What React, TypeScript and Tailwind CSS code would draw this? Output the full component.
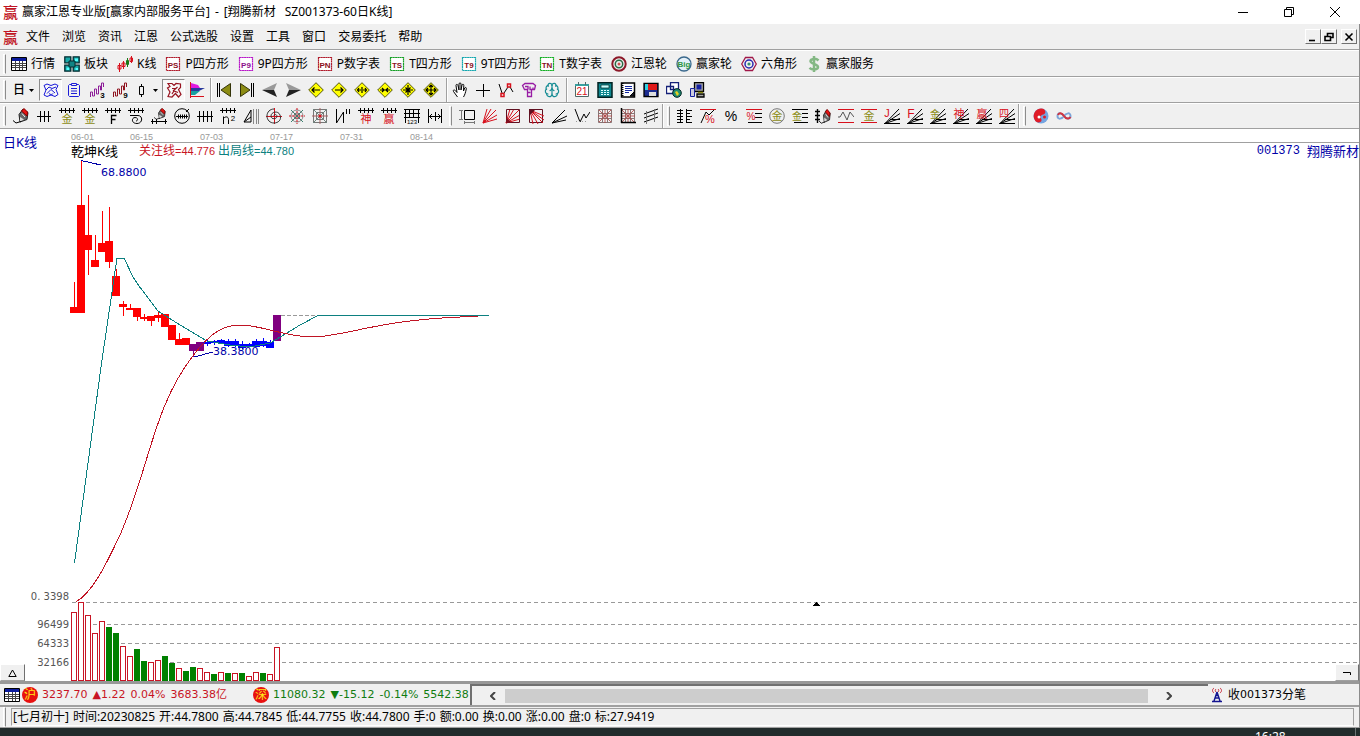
import type { ReactNode } from "react";
import clsx from "clsx";
import { Brain } from "lucide-react";

type Tool = { name: string; icon: ReactNode; pressed?: boolean };

const RED = "#d8101c";
const OLIVE = "#8c8c14";

function Icon({ children }: { children: ReactNode }) {
  return (
    <svg viewBox="0 0 16 16" className="size-4 shrink-0" fill="none" stroke="#000" aria-hidden="true">
      {children}
    </svg>
  );
}

type GlyphProps = { x?: number; y?: number; size?: number; color?: string; bold?: boolean; children: string };

// One character drawn inside an icon
function Glyph({ x = 8, y = 15, size = 11, color = "#000", bold, children }: GlyphProps) {
  return (
    <text
      x={x}
      y={y}
      fontSize={size}
      fontWeight={bold ? 700 : 400}
      fill={color}
      stroke="none"
      textAnchor="middle"
      className="font-['Liberation_Sans','Noto_Sans_CJK_SC',sans-serif]"
    >
      {children}
    </text>
  );
}

const Comb = () => <path d="M0 2.5h16M2.5 0v5M6.5 0v5M10.5 0v5M14.5 0v5" />;

const Pen = () => (
  <>
    <path d="M6 6.5 10 1l5 3.500-1 7L7 14z" fill="#666" stroke="#222" />
    <path d="M8.500 3 11 .5 14.500 4l-.5 4z" fill="#e81414" stroke="#800" />
    <path d="M9 5.500 12 9" stroke="#eee" />
    <path d="M7 9v4.500l4-2z" fill="#ddd" stroke="none" />
    <path d="M0 12.500 3 15l5-1.500" />
  </>
);

const FanLines = () => <path d="M0 15.5h16M1 15.5 16 10.500M1 15.5 16 5.500M1 15.5 15 1M6 11.5h10" />;

const RedFan = () => <path d="M1 15 5 1M1 15 9 1M1 15 14 2M1 15 15 7M1 15 15 11" stroke={RED} />;

const RedGrid = () => (
  <>
    <path d="M1.5 1.5h13v13h-13zM5.5 1v14M10.5 1v14M1 5.5h14M1 10.5h14" stroke="#8a7474" />
    <path d="M2 2l12 12M14 2 2 14M8 1v14M1 8h14" stroke="#b24040" strokeWidth=".8" />
  </>
);

function Diamond({ d }: { d: string }) {
  return (
    <Icon>
      <path d="M8 .7 15.3 8 8 15.3.7 8z" fill="#ffff00" stroke="#55550c" />
      <path d={d} strokeWidth="1.2" />
    </Icon>
  );
}

function LetterBox({ text, color, ink = "#8b1020" }: { text: string; color: string; ink?: string }) {
  return (
    <Icon>
      <rect x="1.5" y="1.5" width="13" height="13" fill="#fff" stroke={color} strokeWidth="1.2" strokeDasharray="2 .3" />
      <Glyph y={11.5} size={8} color={ink} bold>
        {text}
      </Glyph>
    </Icon>
  );
}

const TableIcon = () => (
  <Icon>
    <path d="M.5 1.5h15v13H.5z" fill="#fff" />
    <path d="M1 2h14v3H1z" fill="#0a1a9c" stroke="none" />
    <path d="M1 7.5h14M1 9.5h14M1 11.5h14M4.5 5v9M8.5 5v9M11.5 5v9" stroke="#444" />
  </Icon>
);

const features: Tool[] = [
  { name: "行情", icon: <TableIcon /> },
  {
    name: "板块",
    icon: (
      <Icon>
        <path d="M.8.8h6v6h-6zM9.200.8h6v6h-6zM.8 9.200h6v6h-6zM9.200 9.200h6v6h-6z" fill="#18a8a8" stroke="#042c30" strokeWidth="1.3" />
        <path d="M5 5h6v6H5z" fill="#108484" stroke="#042c30" />
        <path d="M11 2.500h3v2.500h-3zM2.500 11.500h2.500v2.500H2.500zM11.500 12h2.500v2h-2.500z" fill="#5ff" stroke="none" />
      </Icon>
    ),
  },
  {
    name: "K线",
    icon: (
      <Icon>
        <path d="M2.5 7v9M1 9.5h3v3.500H1zM6.5 5v8M5 7h3v3.500H5zM14.5 0v7M13 2h2.500v3.500H13z" stroke={RED} />
        <path d="M10.5 2v9M9.500 4.500h2v4h-2z" stroke="#187a18" />
      </Icon>
    ),
  },
  { name: "P四方形", icon: <LetterBox text="PS" color="#b01c2c" /> },
  { name: "9P四方形", icon: <LetterBox text="P9" color="#b818c8" ink="#8c108c" /> },
  { name: "P数字表", icon: <LetterBox text="PN" color="#b01c2c" /> },
  { name: "T四方形", icon: <LetterBox text="TS" color="#18a028" /> },
  { name: "9T四方形", icon: <LetterBox text="T9" color="#18a8b0" /> },
  { name: "T数字表", icon: <LetterBox text="TN" color="#18b028" /> },
  {
    name: "江恩轮",
    icon: (
      <Icon>
        <circle cx="8" cy="8" r="6.7" stroke="#8c1828" strokeWidth="2" />
        <circle cx="8" cy="8" r="3.7" stroke="#2a6a44" strokeWidth="1.5" />
        <circle cx="8" cy="8" r="1.5" fill="#d05050" stroke="none" />
      </Icon>
    ),
  },
  {
    name: "赢家轮",
    icon: (
      <Icon>
        <circle cx="8" cy="8" r="7" fill="#e4f0f8" stroke="#3a688c" strokeWidth="1.3" />
        <Glyph y={11} size={8} color="#2c9440" bold>
          Big
        </Glyph>
      </Icon>
    ),
  },
  {
    name: "六角形",
    icon: (
      <Icon>
        <path d="M4.5 1.5h7L15.3 8l-3.8 6.5h-7L.7 8z" stroke="#a01848" strokeWidth="1.3" />
        <circle cx="8" cy="8" r="4" stroke="#2828b0" strokeWidth="1.5" />
        <circle cx="8" cy="8" r="1.6" fill="#38906c" stroke="none" />
      </Icon>
    ),
  },
  {
    name: "赢家服务",
    icon: (
      <Icon>
        <path d="M12.5 4.500C10 2 4.500 2.500 4.500 5.300S12 8 12 11s-6 3.200-8.500.8M8 0v16" stroke="#84b884" strokeWidth="2.5" />
      </Icon>
    ),
  },
];

const viewTools: Tool[] = [
  {
    name: "叠加",
    pressed: true,
    icon: (
      <Icon>
        <path d="M1 3.500 4 2l4 1.500L12 2l3 1.500-2 4 2 5-3 2-4-1.500L4 14.500l-3-1.500 2-5zM3 8l3-3 3 1.500 4-1.500M4 11.500l4-4 4 3.500M6 11.500c1 1.500 4 1 4 0" stroke="#1616d8" />
      </Icon>
    ),
  },
  {
    name: "信息",
    icon: (
      <Icon>
        <path d="M5 2.5H3.5l-1 1v10l1 1h9l1-1v-10l-1-1H11M5.5 1.5h5v2h-5zM5 6.5h6M5 9h6M5 11.5h6" stroke="#1c1cd8" />
      </Icon>
    ),
  },
  {
    name: "三浪",
    icon: (
      <Icon>
        <path d="M1.5 15v-5h2v4h2V7h2v5h2V4h2v4h1V1h2v4" stroke="#8c1c98" />
        <Glyph x={13.5} y={16} size={8} bold>
          3
        </Glyph>
      </Icon>
    ),
  },
  {
    name: "九浪",
    icon: (
      <Icon>
        <path d="M1.5 15v-5h2v4h2V7h2v5h2V4h2v4h1V1h2v4" stroke="#901420" />
        <Glyph x={13.5} y={16} size={8} bold>
          9
        </Glyph>
      </Icon>
    ),
  },
];

const signalTools: Tool[] = [
  {
    name: "乾坤",
    pressed: true,
    icon: (
      <Icon>
        <path d="M2 1.500h4l2 2 2-2 4.500.5v3.500l-2 2 2.500 5-2.500 2.500-3-3.500-3.500 3.500-4-.5 2-4.500L1.500 6 4 4.500zM6 6.500h4.500M7 9l4.500-4M6 12l2-3 4 1.500" stroke="#981420" strokeWidth="1.2" />
      </Icon>
    ),
  },
  {
    name: "筹码",
    icon: (
      <Icon>
        <path d="M2 1 9 3l2 3H2z" fill="#e018e0" stroke="none" />
        <path d="M2 6h14l-6 3H2z" fill="#28389c" stroke="none" />
        <path d="M2 9h9l-5 4H2z" fill="#18a0a0" stroke="none" />
        <path d="M1.5 0v16M1 14.5h14" stroke={RED} />
      </Icon>
    ),
  },
];

const moveTools: Tool[] = [
  { name: "首个", icon: <Icon><path d="M1.5 1v14M3.5 1v14" /><path d="M14.5 1.5v13L5 8z" fill={OLIVE} stroke="#333308" /></Icon> },
  { name: "末个", icon: <Icon><path d="M14.5 1v14M12.5 1v14" /><path d="M1.500 1.500v13L11 8z" fill={OLIVE} stroke="#333308" /></Icon> },
  { name: "后退", icon: <Icon><path d="M0 8l15-7-3 7z" fill="#999" stroke="none" /><path d="M0 8h12l3 7z" fill="#222" stroke="none" /></Icon> },
  { name: "前进", icon: <Icon><path d="M16 8 1 1l3 7z" fill="#999" stroke="none" /><path d="M16 8H4l-3 7z" fill="#222" stroke="none" /></Icon> },
  { name: "左移", icon: <Diamond d="M4 8h8M6.5 5.5 4 8l2.5 2.5" /> },
  { name: "右移", icon: <Diamond d="M4 8h8M9.5 5.5 12 8l-2.5 2.5" /> },
  { name: "拉宽", icon: <Diamond d="M3 8h4M9 8h4M5 6 3.500 8 5 10M11 6l1.500 2-1.500 2M8 5v6" /> },
  { name: "压窄", icon: <Diamond d="M3 8h10M5 6l2 2-2 2M11 6 9 8l2 2" /> },
  { name: "缩小", icon: <Diamond d="M3 8h10M8 3v10M5.500 5.500l5 5M10.500 5.500l-5 5" /> },
  { name: "放大", icon: <Diamond d="M3 8h10M8 3v10M6 5l2-2 2 2M6 11l2 2 2-2M5 6 3 8l2 2M11 6l2 2-2 2" /> },
];

const cursorTools: Tool[] = [
  {
    name: "拖动",
    icon: (
      <Icon>
        <path d="M5.500 15 1.500 9.500c-1-1.500 1-2 2-.8L5 10.500 4 3.500c0-1.500 1.500-1.500 2 0L7 8V2c0-1.500 2-1.500 2 0v6l1-5c.4-1.200 2-1 1.800.5L11.500 9l1.200-3c.8-1 2-.5 1.600.8-.8 3.700-1.300 5.700-2.800 8.200" fill="#fff" />
      </Icon>
    ),
  },
  { name: "十字", icon: <Icon><path d="M1 8.5h14M8.5 2v13" /></Icon> },
  {
    name: "折线",
    icon: (
      <Icon>
        <path d="M1 2l3 9M6 11l4-6M12 5l3 5" />
        <path d="M3 11.5h3v3H3zM9.500 2h3v3h-3z" stroke={RED} strokeWidth="1.5" />
      </Icon>
    ),
  },
  {
    name: "预测",
    icon: (
      <Icon>
        <path d="M1.5 3.500 4 1.500h8l2.500 2-1 4h-3v7h-4v-7h-3zM4 4.500h3v3M9 4.500v3h3v-2M6.500 10.500h3" stroke="#981ca4" strokeWidth="1.3" />
      </Icon>
    ),
  },
  { name: "智能", icon: <Brain className="size-4" strokeWidth={1.8} color="#168c94" /> },
];

const systemTools: Tool[] = [
  {
    name: "日历",
    icon: (
      <Icon>
        <path d="M1.5 2.5h13v12h-13z" fill="#fff" stroke="#506868" />
        <path d="M1 2h14v2H1z" fill="#38a0a0" stroke="none" />
        <path d="M4.500 0v3M11.500 0v3" stroke="#506868" />
        <Glyph y={13} size={10} color={RED}>21</Glyph>
      </Icon>
    ),
  },
  {
    name: "计算器",
    icon: (
      <Icon>
        <path d="M1 .8h14v14.400H1z" fill="#108890" stroke="#022" strokeWidth="1.5" />
        <path d="M4 3h8v3H4z" fill="#c8ffff" stroke="#022" strokeWidth=".7" />
        <path d="M4 8.5h8M4 10.5h8M4 12.5h8" stroke="#dff" strokeDasharray="2 1" />
      </Icon>
    ),
  },
  {
    name: "笔记",
    icon: (
      <Icon>
        <path d="M1.5 1h13v14h-13z" fill="#fff" strokeWidth="1.5" />
        <path d="M2.5 1v14" strokeWidth="2" strokeDasharray="1 1" />
        <path d="M5 4.5h7M5 6.5h7M5 8.5h7M5 10.5h4" stroke="#1428a0" />
        <path d="M10 14l4-4v4z" fill="#223" />
      </Icon>
    ),
  },
  {
    name: "保存",
    icon: (
      <Icon>
        <path d="M1 1.5h14v13H1z" fill="#1c2c90" strokeWidth="1.3" />
        <path d="M2 2h3v6H2z" fill="#30d0e0" stroke="none" />
        <path d="M5 2h9v6H5z" fill="#e01818" stroke="none" />
        <path d="M6 10h7v4H6z" fill="#ddd" stroke="none" />
      </Icon>
    ),
  },
  {
    name: "网络",
    icon: (
      <Icon>
        <path d="M4.5.5h8v7h-8zM.5 4.5h7v7h-7z" fill="#fff" stroke="#142078" strokeWidth="1.3" />
        <circle cx="11" cy="11" r="4.3" fill="#208c70" stroke="#022" />
        <path d="M9 10l2-1 2 3-2 2z" fill="#e8d020" stroke="none" />
      </Icon>
    ),
  },
  {
    name: "远程",
    icon: (
      <Icon>
        <path d="M5.5.5h9v9h-9zM8 12h7v3H8z" fill="#aaa" strokeWidth="1.3" />
        <path d="M7.500 2.500h5v5h-5z" fill="#1420a0" stroke="none" />
        <path d="M9 10.500h5" stroke="#8c8c14" strokeWidth="1.500" />
        <path d="M1.5 6.5h4v8h-4z" fill="#ccd" stroke="#1420a0" />
      </Icon>
    ),
  },
];

const drawTools: Tool[] = [
  { name: "画笔", icon: <Icon><Pen /></Icon> },
  { name: "标尺", icon: <Icon><path d="M1 8.5h14M4.5 3v11M8.5 3v11M12.5 3v11" /></Icon> },
  { name: "金尺", icon: <Icon><Comb /><Glyph color={OLIVE}>金</Glyph></Icon> },
  { name: "金尺二", icon: <Icon><Comb /><Glyph color={OLIVE}>金</Glyph></Icon> },
  { name: "斐波", icon: <Icon><Comb /><path d="M6.5 16V7.5h5M6.5 11.5h4" strokeWidth="1.3" /></Icon> },
  { name: "螺旋", icon: <Icon><Comb /><path d="M2 7.5h8c5 0 5 8-1 8s-5.500-6-2-6 3 3.500 1 3.500" /></Icon> },
  { name: "笔尺", icon: <Icon><g transform="translate(3 0) scale(.75)"><Pen /></g><path d="M0 13.5h16M1.5 11v5M5.5 11v5M14.5 11v5" /></Icon> },
  { name: "圆尺", icon: <Icon><circle cx="8" cy="8" r="7.300" /><path d="M2 8.5h12M4.5 6.500v4M6.5 6.500v4M8.5 6.500v4M10.5 6.500v4M12.5 6.500v4M12 4l3-3" /></Icon> },
  { name: "周期线", icon: <Icon><path d="M0 8.5h16M2.5 3v11M6.5 3v11M10.5 3v11M14.5 3v11" /></Icon> },
  { name: "平方", icon: <Icon><Comb /><path d="M3.5 16V8.5M3.5 10.500c2-2.500 5-2 5 1V16" /><Glyph x={13} y={13} size={8}>2</Glyph></Icon> },
  { name: "三角", icon: <Icon><path d="M1 14 8 2v12zM1 14l7-5" /><path d="M10.5 1v15M13.5 1v15M15.5 1v15" stroke="#888" /></Icon> },
  { name: "轮", icon: <Icon><path d="M0 8.5h16M8.5 0v16" stroke={RED} /><path d="M8 8c0-2 3-2 3 .5S5 12 5 8s7-6 9-1-2 8-6 8-7-3-7-7 3-7 7-7" stroke="#333" /></Icon> },
  { name: "星轮", icon: <Icon><circle cx="8" cy="8" r="6" stroke="#888" /><circle cx="8" cy="8" r="3" stroke="#777" /><path d="M8 0v16M0 8h16" stroke={RED} strokeDasharray="2 1" /><path d="M2 2l12 12M14 2 2 14" stroke="#3c8070" /></Icon> },
  { name: "方轮", icon: <Icon><path d="M1.5 1.5h13v13h-13zM4.5 4.5h7v7h-7z" stroke="#777" /><path d="M1 1l14 14M15 1 1 15" stroke="#6c8880" /><path d="M8 0v16M0 8h16" stroke="#a06060" /><circle cx="8" cy="8" r="1.5" fill={RED} stroke="none" /></Icon> },
  { name: "波段", icon: <Icon><path d="M1.5 1v14L8.5 4v11M11.5 1v5M14.5 1v5" /></Icon> },
  { name: "神尺", icon: <Icon><Comb /><Glyph color={RED}>神</Glyph></Icon> },
  { name: "赢尺", icon: <Icon><Comb /><Glyph color={RED}>赢</Glyph></Icon> },
  { name: "数尺", icon: <Icon><path d="M0 1.5h16M0 5.5h16M0 9.5h16M1.5 1v14M5.5 1v8M9.5 1v8M14.5 1v14" /><Glyph y={16} size={6}>123</Glyph></Icon> },
  { name: "间距", icon: <Icon><path d="M1.5 1v14M14.5 1v14M8.5 4v9M2 8.5h12M5 6 2.5 8.5 5 11M11 6l2.5 2.5L11 11" /></Icon> },
];

const gannTools: Tool[] = [
  { name: "框选", icon: <Icon><path d="M5.5 2.5h10v9h-10z" /><path d="M2.5 2v10M0 2.5h4M0 11.5h4M5.5 14.5h10M5.5 13v3M15.5 13v3" stroke="#777" /></Icon> },
  { name: "扇形", icon: <Icon><RedFan /></Icon> },
  { name: "扇形框", icon: <Icon><RedFan /><path d="M1.5 1.5h13v13h-13z" stroke="#601020" /><path d="M1 15V9l6 6z" fill="#801020" stroke="none" /></Icon> },
  { name: "下扇形", icon: <Icon><path d="M1.5 1.5h13v13h-13z" stroke="#601020" /><path d="M2 2l14 6M2 2l14 10M2 2l13 13M2 2l8 14M2 2l3 14" stroke={RED} /><path d="M1 1h7L1 8z" fill="#601020" stroke="none" /></Icon> },
  { name: "速阻线", icon: <Icon><path d="M1 15 14 2M1 15 16 8M1 15l14-3" /></Icon> },
  { name: "折返", icon: <Icon><path d="M1 1l5 13 4-8 2 4 4-6" /><path d="M2 13.5h12" stroke="#999" strokeDasharray="1 2" /></Icon> },
  { name: "方格", icon: <Icon><RedGrid /></Icon> },
  { name: "坐标方格", icon: <Icon><RedGrid /><path d="M1.5 0v15M1 14.5h15" strokeWidth="1.5" /></Icon> },
  { name: "平行线", icon: <Icon><path d="M1 6l14-5M1 10l14-5M1 14l14-5" /><path d="M3.5 3v13M11.5 1v13" stroke="#777" /></Icon> },
];

const ratioTools: Tool[] = [
  { name: "刻度", icon: <Icon><path d="M3.5 1v14M9.5 1v14M0 2.5h6M0 5.5h6M0 8.5h6M0 11.5h6M0 14.5h6M9 2.5h6M9 5.5h4M9 8.5h6M9 11.5h4M9 14.5h6" /></Icon> },
  { name: "涨幅", icon: <Icon><path d="M0 1.5h16" stroke={RED} /><path d="M1 15 6 4l3 3 5-5" /><Glyph x={10} y={15} color={RED}>%</Glyph></Icon> },
  { name: "百分比", icon: <Icon><Glyph y={13} size={14}>%</Glyph></Icon> },
  { name: "百分线", icon: <Icon><path d="M0 1.5h16" stroke={RED} /><path d="M9 5.5h7M9 9.5h7M2 14.5h14" /><Glyph x={5} y={12} size={10} color={RED}>%</Glyph></Icon> },
  { name: "金圆", icon: <Icon><circle cx="8" cy="8" r="7.3" stroke="#777" /><Glyph y={12} color={OLIVE}>金</Glyph></Icon> },
  { name: "黄金线", icon: <Icon><path d="M0 1.5h16M10 5.5h6M10 9.5h6M2 14.5h14" /><Glyph x={5} y={12} size={10} color={OLIVE}>金</Glyph></Icon> },
  { name: "笔刻度", icon: <Icon><path d="M2.5 1v14M0 3.5h5M0 7.5h5M0 11.5h5" strokeWidth="1.4" /><g transform="translate(4 1) scale(.75 .95)"><Pen /></g></Icon> },
  { name: "波动", icon: <Icon><path d="M0 1.5h16M0 14.5h16" stroke={RED} /><path d="M0 9h2l3-5 4 8 3-8 4 5" stroke="#555" /></Icon> },
  { name: "金线", icon: <Icon><path d="M0 1.5h16M0 14.5h16" stroke={RED} /><Glyph y={12} color={OLIVE}>金</Glyph></Icon> },
  { name: "J扇", icon: <Icon><FanLines /><Glyph x={3} y={9} color={RED}>J</Glyph></Icon> },
  { name: "F扇", icon: <Icon><FanLines /><Glyph x={4} y={10} size={12} color={RED}>F</Glyph></Icon> },
  { name: "金扇", icon: <Icon><FanLines /><Glyph x={5} y={10} size={10} color={OLIVE}>金</Glyph></Icon> },
  { name: "神扇", icon: <Icon><FanLines /><Glyph x={6} y={10} color={RED}>神</Glyph></Icon> },
  { name: "赢扇", icon: <Icon><FanLines /><Glyph x={6} y={10} color={RED}>赢</Glyph></Icon> },
  { name: "四扇", icon: <Icon><FanLines /><Glyph x={5} y={9} size={10} color={RED}>四</Glyph></Icon> },
];

const otherTools: Tool[] = [
  {
    name: "阴阳",
    icon: (
      <Icon>
        <circle cx="8" cy="8" r="7.5" fill="#74a4e0" stroke="none" />
        <path d="M10 .8A7.500 7.500 0 0 0 4 14.300C8 15 9.500 12.500 8 10.500S8 7 10.500 6.500 13 2 10 .8z" fill="#e01c28" stroke="none" />
        <circle cx="6" cy="9" r="1.5" fill="#fff" stroke="none" />
        <circle cx="11.5" cy="9" r="1.5" fill="#e01c28" stroke="none" />
      </Icon>
    ),
  },
  {
    name: "无限",
    icon: (
      <Icon>
        <path d="M8 8C6 5 1.5 4 1.5 8s4.500 3 6.500 0" stroke="#7ca4d8" strokeWidth="2" />
        <path d="M8 8c2-3 6.500-4 6.500 0S10 11 8 8" stroke="#7ca4d8" strokeWidth="2" />
        <path d="M2 7C3 4 6 5 8 8s5 3.500 6.500 1" stroke="#d03440" strokeWidth="2" />
      </Icon>
    ),
  },
];

const menus = ["文件", "浏览", "资讯", "江恩", "公式选股", "设置", "工具", "窗口", "交易委托", "帮助"];

const dates = ["06-15", "07-03", "07-17", "07-31", "08-14"];

const details = [
  "[七月初十]",
  "时间:20230825",
  "开:44.7800",
  "高:44.7845",
  "低:44.7755",
  "收:44.7800",
  "手:0",
  "额:0.00",
  "换:0.00",
  "涨:0.00",
  "盘:0",
  "标:27.9419",
];

// [high, top of body, bottom of body, low, colour]
type Candle = [number, number, number, number, string];

const UP = "#ff0000";
const MID = "#800080";
const DOWN = "#0000ff";

const candles: Candle[] = [
  [282, 307, 313, 313, UP],
  [160, 205, 313, 313, UP],
  [195, 235, 250, 275, UP],
  [235, 260, 267, 267, UP],
  [211, 243, 252, 252, UP],
  [207, 241, 262, 268, UP],
  [269, 276, 296, 296, UP],
  [301, 304, 307, 316, UP],
  [304, 308, 310, 310, UP],
  [308, 308, 317, 321, UP],
  [314, 317, 319, 321, UP],
  [316, 316, 321, 326, UP],
  [311, 315, 318, 322, UP],
  [314, 314, 327, 327, UP],
  [325, 325, 340, 340, UP],
  [333, 339, 345, 345, UP],
  [338, 338, 345, 345, UP],
  [344, 344, 351, 357, MID],
  [342, 342, 351, 351, MID],
  [340, 342, 344, 346, DOWN],
  [340, 341, 343, 345, DOWN],
  [339, 340, 343, 343, DOWN],
  [339, 341, 346, 347, DOWN],
  [339, 341, 346, 347, DOWN],
  [341, 344, 348, 349, DOWN],
  [343, 344, 346, 347, DOWN],
  [339, 341, 347, 347, DOWN],
  [338, 341, 346, 347, DOWN],
  [340, 342, 348, 348, DOWN],
  [315, 315, 341, 341, MID],
];

// Top of each volume bar; negative numbers are the solid green ones
const volumes = [
  612, 602, 615, 633, 621, -627, -633, 646, 656, -649, -661, 662, 660, -656, -663,
  668, -671, -667, 668, 672, -674, 672, -673, 673, -673, 676, 672, -673, 674, 647,
];

function Grip() {
  return <span className="mx-[3px] h-5 w-[3px] shrink-0 border-y border-r border-l border-white border-r-[#8c8c8c]" />;
}

function Divider() {
  return <span className="h-full w-0.5 shrink-0 border-r border-l border-r-white border-l-[#a0a0a0]" />;
}

function ToolGroup({ tools }: { tools: Tool[] }) {
  return (
    <div className="flex">
      {tools.map((tool) => (
        <button
          key={tool.name}
          type="button"
          aria-label={tool.name}
          className={clsx(
            "flex h-[22px] w-[23px] items-center justify-center",
            tool.pressed && "border border-t-[#8c8c8c] border-r-white border-b-white border-l-[#8c8c8c] bg-[#f8f8f8]",
          )}
        >
          {tool.icon}
        </button>
      ))}
    </div>
  );
}

function DropArrow() {
  return (
    <svg viewBox="0 0 5 3" className="h-[3px] w-[5px]" aria-hidden="true">
      <path d="M0 0h5L2.5 3z" />
    </svg>
  );
}

function Bar({ children }: { children: ReactNode }) {
  return (
    <div className="flex h-[26px] items-center border-t border-b border-t-white border-b-[#a0a0a0]">{children}</div>
  );
}

function WindowButton({ label, d }: { label: string; d: string }) {
  return (
    <button type="button" aria-label={label} className="flex h-5 w-[46px] items-center justify-center">
      <svg viewBox="0 0 12 12" className="size-3" fill="none" stroke="#000" aria-hidden="true">
        <path d={d} />
      </svg>
    </button>
  );
}

function ChildButton({ label, d }: { label: string; d: string }) {
  return (
    <button
      type="button"
      aria-label={label}
      className="flex h-[15px] w-4 items-center justify-center border border-t-white border-r-[#707070] border-b-[#707070] border-l-white"
    >
      <svg viewBox="0 0 10 10" className="size-2.5" fill="none" stroke="#000" strokeWidth="1.6" aria-hidden="true">
        <path d={d} />
      </svg>
    </button>
  );
}

function CityBadge({ children }: { children: string }) {
  return (
    <span className="flex size-4 shrink-0 items-center justify-center rounded-full bg-[#e81010] text-[12px] leading-none text-[#ffe818]">
      {children}
    </span>
  );
}

function Chart() {
  return (
    <svg className="block h-[523px] w-full font-['DejaVu_Sans',sans-serif]" role="img" aria-label="乾坤K线">
      <g transform="translate(-70 -158)" fill="none" shapeRendering="crispEdges">
        {[602.5, 624.5, 643.5, 662.5].map((y) => (
          <line key={y} x1="72" x2="200%" y1={y} y2={y} stroke="#999" strokeDasharray="4 3" />
        ))}
        <path d="M812 606h9l-4.5-4z" fill="#000" />

        {volumes.map((v, i) =>
          v < 0 ? (
            <rect key={i} x={71 + i * 7} y={-v} width="6" height={681 + v} fill="#008000" />
          ) : (
            <rect key={i} x={71.5 + i * 7} y={v + 0.5} width="5" height={680 - v} fill="#fff" stroke="#c81424" />
          ),
        )}

        {candles.map(([high, top, bottom, low, color], i) => (
          <g key={i} fill={color}>
            <rect x={74 + i * 7} y={high} width="1" height={low - high} />
            <rect x={70 + i * 7} y={top} width="8" height={bottom - top} />
          </g>
        ))}

        <path d="M281 315.5h38" stroke="#999" strokeDasharray="4 2" />
        <path
          d="M74.5 563 101 367 117 258h7l9 19 6 9 19 25 22 14 27 16 23 4 20 2 20-4 12-7 18-11 18-9.500h171"
          stroke="#0c8080"
        />
        <path
          d="M76 602C92 592 103 571 120 535 140 490 150 440 165 405 173 385 185 366 195 353 208 337 220 325 240 325 262 325 285 337 312 337 345 337 380 318 478 316.5"
          stroke="#c01424"
        />
        <path d="M81 160.5 101 165M194 357l19-5" stroke="#0000a8" />
      </g>
      <g fill="#0000a8" fontSize="11">
        <text x="31" y="18">68.8800</text>
        <text x="143" y="197">38.3800</text>
      </g>
    </svg>
  );
}

export default function App() {
  return (
    <div className="flex min-h-screen flex-col bg-white font-['Noto_Sans','Noto_Sans_CJK_SC',sans-serif] text-[12px] leading-4 text-black">
      {/* Title bar */}
      <header className="flex h-6 items-center pr-0.5 pl-[3px]">
        <span className="w-[19px] text-[15px] font-medium text-[#c01424]">赢</span>
        <h1 className="flex gap-[5px] whitespace-nowrap">
          <span>赢家江恩专业版[赢家内部服务平台]</span>
          <span>-</span>
          <span>[翔腾新材</span>
          <span className="pl-1">SZ001373-60日K线]</span>
        </h1>
        <div className="ml-auto flex">
          <WindowButton label="最小化" d="M1 6.5h10" />
          <WindowButton label="还原" d="M1.5 3.5h7v7h-7zM3.5 3.5v-2h7v7h-2" />
          <WindowButton label="关闭" d="M1 1l10 10M11 1 1 11" />
        </div>
      </header>

      <div className="flex flex-1 flex-col border-r border-[#8c8c8c]">
        <div className="bg-[#f0f0f0]">
          <nav className="flex h-[26px] items-center border-b border-[#a0a0a0] pr-0.5 pl-[3px]">
            <span className="w-[23px] text-[15px] font-medium text-[#c01424]">赢</span>
            <div className="flex gap-3">
              {menus.map((menu) => (
                <button key={menu} type="button">{menu}</button>
              ))}
            </div>
            <div className="ml-auto flex">
              <ChildButton label="最小化文档" d="M1 8.5h6" />
              <ChildButton label="还原文档" d="M1 4.5h5.500v4H1zM3.500 4V1.500H9v4H7" />
              <span className="w-1" />
              <ChildButton label="关闭文档" d="M1.5 1.5l7 7M8.5 1.5l-7 7" />
            </div>
          </nav>

          <div className="flex h-[27px] items-center border-t border-b border-t-white border-b-[#a0a0a0]">
            <Grip />
            <div className="ml-0.5 flex gap-[9px]">
              {features.map((feature) => (
                <button key={feature.name} type="button" className="flex items-center gap-1">
                  {feature.icon}
                  <span className="whitespace-nowrap">{feature.name}</span>
                </button>
              ))}
            </div>
          </div>

          <Bar>
            <Grip />
            <button type="button" aria-label="周期" className="flex w-[30px] items-center gap-1 pl-1 font-medium">
              日
              <DropArrow />
            </button>
            <ToolGroup tools={viewTools} />
            <button type="button" aria-label="K线样式" className="flex w-[31px] items-center gap-1 pl-0.5">
              <Icon>
                <path d="M8.5 2v3M8.5 12v3M6.5 4.500h4v8h-4z" />
              </Icon>
              <DropArrow />
            </button>
            <ToolGroup tools={signalTools} />
            <span className="w-0.5" />
            <Divider />
            <ToolGroup tools={moveTools} />
            <span className="w-1" />
            <Divider />
            <ToolGroup tools={cursorTools} />
            <span className="w-[3px]" />
            <Divider />
            <span className="w-0.5" />
            <ToolGroup tools={systemTools} />
          </Bar>

          <Bar>
            <Grip />
            <ToolGroup tools={drawTools} />
            <Grip />
            <ToolGroup tools={gannTools} />
            <Divider />
            <Grip />
            <ToolGroup tools={ratioTools} />
            <Divider />
            <Grip />
            <ToolGroup tools={otherTools} />
          </Bar>
        </div>

        {/* Chart */}
        <main className="relative flex flex-1">
          <div className="flex w-[70px] shrink-0 flex-col pt-[5px]">
            <div className="pl-[3px] text-[13px] text-[#0000a8]">日K线</div>
            <div className="mt-auto flex flex-col pr-px pb-[9px] text-right font-['DejaVu_Sans',sans-serif] text-[10px] text-[#555]">
              <span className="mb-2 h-5 leading-5">0. 3398</span>
              <span className="h-[19px] leading-[19px]">96499</span>
              <span className="h-[19px] leading-[19px]">64333</span>
              <span className="h-[19px] leading-[19px]">32166</span>
            </div>
          </div>
          <div className="flex min-w-0 flex-1 flex-col">
            <div className="ml-px flex h-3.5 border-b border-[#a0a0a0] font-['Liberation_Sans',sans-serif] text-[9px] text-[#999]">
              <span className="w-[59px]">06-01</span>
              {dates.map((date) => (
                <span key={date} className="w-[70px]">{date}</span>
              ))}
            </div>
            <div className="ml-px flex h-[15px] items-center">
              <span className="w-[68px] text-[13px]">乾坤K线</span>
              <span className="w-[79px] whitespace-nowrap text-[#c81424]">
                关注线<span className="font-['Liberation_Sans'] text-[11px]">=44.776</span>
              </span>
              <span className="whitespace-nowrap text-[#0c8080]">
                出局线<span className="font-['Liberation_Sans'] text-[11px]">=44.780</span>
              </span>
              <span className="ml-auto flex gap-[7px] text-[#0000a8]">
                <span className="font-['Liberation_Mono',monospace]">001373</span>
                <span className="text-[13px]">翔腾新材</span>
              </span>
            </div>
            <Chart />
          </div>
          <button
            type="button"
            aria-label="展开"
            className="absolute bottom-0 left-0 flex h-[17px] w-[25px] items-center justify-center border border-t-white border-r-[#707070] border-b-[#a0a0a0] border-l-white bg-[#f0f0f0]"
          >
            <svg viewBox="0 0 9 8" className="h-2 w-[9px]" fill="none" stroke="#000" aria-hidden="true">
              <path d="M.8 7.5h7.400L4.500 1z" />
            </svg>
          </button>
          <button
            type="button"
            aria-label="收起"
            className="absolute right-0 bottom-0 flex h-[17px] w-6 items-center justify-center border border-t-white border-r-[#707070] border-b-[#a0a0a0] border-l-white bg-[#f0f0f0]"
          >
            <svg viewBox="0 0 8 4" className="h-1 w-2" fill="none" stroke="#000" aria-hidden="true">
              <path d="M0 1.5h7.500V4" />
            </svg>
          </button>
        </main>

        {/* Index quotes */}
        <div className="flex h-[26px] items-center border-t-[3px] border-b-2 border-t-[#989898] border-b-[#a0a0a0] bg-[#f0f0f0]">
          <div className="flex w-[470px] shrink-0 items-center pl-1 font-['DejaVu_Sans','Noto_Sans_CJK_SC',sans-serif] text-[11px] whitespace-nowrap">
            <TableIcon />
            <span className="w-0.5 shrink-0" />
            <CityBadge>沪</CityBadge>
            <div className="flex w-[215px] shrink-0 gap-[5px] pl-1 text-[#c81424]">
              <span>3237.70</span>
              <span>▲1.22</span>
              <span>0.04%</span>
              <span>3683.38亿</span>
            </div>
            <CityBadge>深</CityBadge>
            <div className="flex gap-[5px] pl-1 text-[#107c10]">
              <span>11080.32</span>
              <span>▼-15.12</span>
              <span>-0.14%</span>
              <span>5542.38</span>
            </div>
          </div>
          <div className="flex h-full flex-1 items-center border-t-2 border-l-2 border-[#707070] bg-[#f0f0f0]">
            <button type="button" aria-label="向左" className="flex w-[33px] justify-center pl-2">
              <svg viewBox="0 0 6 8" className="h-2 w-1.5" fill="none" stroke="#444" strokeWidth="2" aria-hidden="true">
                <path d="M5 0 1 4l4 4" />
              </svg>
            </button>
            <div className="h-3.5 flex-1 bg-[#cdcdcd]" />
            <button type="button" aria-label="向右" className="flex w-[60px] pl-[18px]">
              <svg viewBox="0 0 6 8" className="h-2 w-1.5" fill="none" stroke="#444" strokeWidth="2" aria-hidden="true">
                <path d="M1 0l4 4-4 4" />
              </svg>
            </button>
          </div>
          <div className="flex w-[151px] shrink-0 items-center gap-[3px] pl-px">
            <Icon>
              <path d="M8 5 5 14M8 5l3 9M6.500 8.500h3M6 11h4M3 14.5h10" stroke="#141490" strokeWidth="1.4" />
              <path d="M5 1C3 2.500 3 4.500 5 6M11 1c2 1.500 2 3.500 0 5M7 2C6 3 6 4 7 5M9 2c1 1 1 2 0 3" stroke="#c82838" />
            </Icon>
            <span className="flex">
              收<span className="font-['DejaVu_Sans'] text-[11px]">001373</span>分笔
            </span>
          </div>
        </div>

        {/* Bar details */}
        <footer className="flex h-[21px] items-center border-b border-[#a0a0a0] bg-[#f0f0f0] pr-[5px]">
          <Grip />
          <div className="ml-0.5 flex h-[18px] flex-1 items-center gap-1 border border-t-[#a0a0a0] border-r-[#a0a0a0] border-b-white border-l-[#a0a0a0] pl-px whitespace-nowrap">
            {details.map((detail) => (
              <span key={detail}>{detail}</span>
            ))}
          </div>
        </footer>
      </div>

      <div className="flex h-2 justify-end overflow-hidden bg-[#222c2c] pr-1">
        <time className="w-[101px] border-r border-[#6c7474] pt-px leading-4 text-white">16:28</time>
      </div>
    </div>
  );
}
